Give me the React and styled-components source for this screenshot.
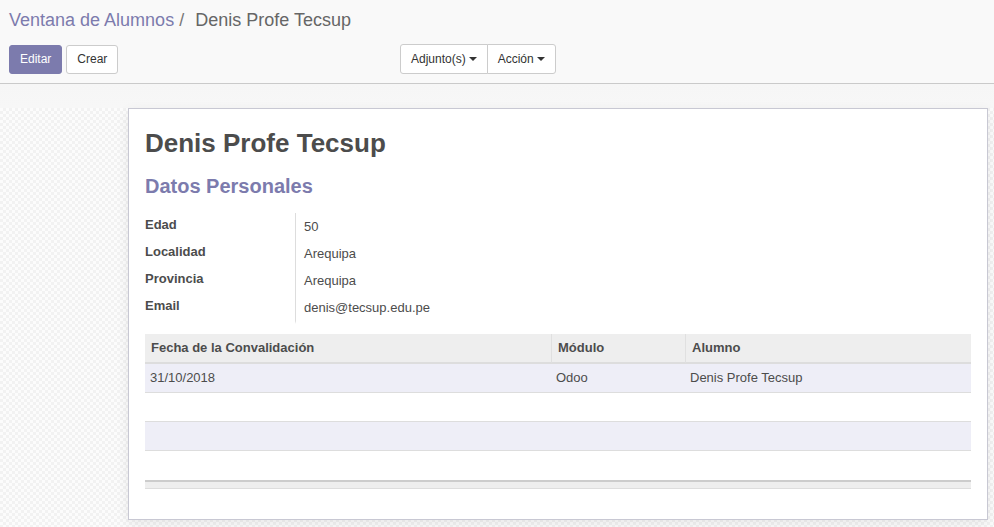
import React from 'react';
import styled, { createGlobalStyle } from 'styled-components';

const GlobalStyle = createGlobalStyle`
  html, body {
    margin: 0;
    padding: 0;
    height: 100%;
    overflow: hidden;
  }
  body {
    font-family: "Liberation Sans", Arial, Helvetica, sans-serif;
    font-size: 13px;
    color: #4c4c4c;
    background: #fff;
  }
`;

const Page = styled.div`
  height: 527px;
  display: flex;
  flex-direction: column;
`;

const ControlPanel = styled.div`
  background: #f9f9f9;
  border-bottom: 1px solid #cacaca;
  height: 84px;
  box-sizing: border-box;
  padding: 9px 9px 0 9px;
`;

const Breadcrumb = styled.div`
  font-size: 18px;
  line-height: 22px;
  color: #777;
  white-space: nowrap;
`;

const Crumb = styled.span`
  color: ${p => (p.active ? '#666' : '#7c7bad')};
`;

const Sep = styled.span`
  color: #777;
  margin: 0 11px 0 5px;
`;

const Toolbar = styled.div`
  display: flex;
  align-items: center;
  margin-top: 13px;
`;

const Buttons = styled.div`
  display: flex;
  gap: 4px;
  width: 391px;
`;

const Button = styled.button`
  font-family: inherit;
  font-size: 12px;
  height: 29px;
  padding: 0 10px;
  border-radius: 3px;
  cursor: pointer;
  border: 1px solid ${p => (p.primary ? '#7c7bad' : '#ccc')};
  background: ${p => (p.primary ? '#7c7bad' : '#fff')};
  color: ${p => (p.primary ? '#fff' : '#333')};
`;

const DropGroup = styled.div`
  display: flex;
`;

const DropButton = styled.button`
  font-family: inherit;
  font-size: 12px;
  height: 30px;
  padding: 0 10px;
  background: #fff;
  color: #333;
  border: 1px solid #ccc;
  margin-left: -1px;
  display: flex;
  align-items: center;
  gap: 3px;
  cursor: pointer;
  &:first-child {
    border-radius: 3px 0 0 3px;
    margin-left: 0;
  }
  &:last-child {
    border-radius: 0 3px 3px 0;
  }
`;

const Caret = styled.span`
  display: inline-block;
  width: 0;
  height: 0;
  border-top: 4px solid #333;
  border-left: 4px solid transparent;
  border-right: 4px solid transparent;
`;

const SheetBg = styled.div`
  flex: 1;
  padding: 24px 6px 0 128px;
  background:
    linear-gradient(to bottom, #f6f6f6 0, #f7f7f7 24px, transparent 24px),
    repeating-conic-gradient(#f2f2f2 0 25%, #fcfcfc 0 50%) 0 0 / 6px 6px;
`;

const Sheet = styled.div`
  background: #fff;
  border: 1px solid #c8c8d3;
  box-shadow: 0 4px 12px rgba(0, 0, 0, 0.08);
  padding: 17px 16px 30px 16px;
`;

const Title = styled.h1`
  margin: 0;
  font-size: 26px;
  line-height: 34px;
  font-weight: bold;
  color: #4c4c4c;
`;

const Subtitle = styled.h2`
  margin: 13px 0 0 0;
  font-size: 20px;
  line-height: 26px;
  font-weight: bold;
  color: #7c7bad;
`;

const FieldGrid = styled.div`
  display: grid;
  grid-template-columns: 150px 1fr;
  margin-top: 14px;
  width: 420px;
`;

const Label = styled.div`
  font-weight: bold;
  height: 27px;
  line-height: 23px;
`;

const Value = styled.div`
  height: 27px;
  line-height: 27px;
  padding-left: 8px;
  border-left: 1px solid #ddd;
  border-bottom: ${p => (p.last ? '3px solid #fff' : 'none')};
`;

const Table = styled.div`
  margin-top: 10px;
  display: grid;
  grid-template-columns: 406px 134px 1fr;
`;

const HeadCell = styled.div`
  background: #eee;
  font-weight: bold;
  height: 28px;
  line-height: 28px;
  padding: 0 6px;
  border-bottom: 2px solid #ddd;
  border-left: ${p => (p.divider ? '1px solid #e0e0e0' : 'none')};
`;

const Cell = styled.div`
  height: 28px;
  line-height: 28px;
  padding: 0 5px;
  background: ${p => (p.tint ? '#eeeef7' : '#fff')};
  border-bottom: 1px solid #ddd;
`;

const EmptyRow = styled.div`
  grid-column: 1 / -1;
  height: 28px;
  background: ${p => (p.tint ? '#eeeef7' : '#fff')};
  border-bottom: 1px solid ${p => (p.tint ? '#ddd' : 'transparent')};
  border-top: ${p => (p.tint ? '1px solid #ddd' : 'none')};
  margin-top: ${p => (p.tint ? '-1px' : '0')};
`;

const Footer = styled.div`
  grid-column: 1 / -1;
  height: 6px;
  background: #eee;
  border-top: 2px solid #ccc;
  border-bottom: 1px solid #ddd;
`;

const fields = [
  ['Edad', '50'],
  ['Localidad', 'Arequipa'],
  ['Provincia', 'Arequipa'],
  ['Email', 'denis@tecsup.edu.pe'],
];

export default function App() {
  return (
    <Page>
      <GlobalStyle />
      <ControlPanel>
        <Breadcrumb>
          <Crumb>Ventana de Alumnos</Crumb>
          <Sep>/</Sep>
          <Crumb active>Denis Profe Tecsup</Crumb>
        </Breadcrumb>
        <Toolbar>
          <Buttons>
            <Button primary>Editar</Button>
            <Button>Crear</Button>
          </Buttons>
          <DropGroup>
            <DropButton>Adjunto(s) <Caret /></DropButton>
            <DropButton>Acción <Caret /></DropButton>
          </DropGroup>
        </Toolbar>
      </ControlPanel>
      <SheetBg>
        <Sheet>
          <Title>Denis Profe Tecsup</Title>
          <Subtitle>Datos Personales</Subtitle>
          <FieldGrid>
            {fields.map(([label, value], i) => (
              <React.Fragment key={label}>
                <Label>{label}</Label>
                <Value last={i === fields.length - 1}>{value}</Value>
              </React.Fragment>
            ))}
          </FieldGrid>
          <Table>
            <HeadCell>Fecha de la Convalidación</HeadCell>
            <HeadCell divider>Módulo</HeadCell>
            <HeadCell divider>Alumno</HeadCell>
            <Cell tint>31/10/2018</Cell>
            <Cell tint>Odoo</Cell>
            <Cell tint>Denis Profe Tecsup</Cell>
            <EmptyRow />
            <EmptyRow tint />
            <EmptyRow />
            <Footer />
          </Table>
        </Sheet>
      </SheetBg>
    </Page>
  );
}
